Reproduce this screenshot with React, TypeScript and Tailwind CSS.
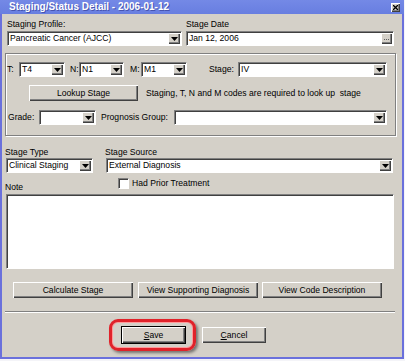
import React from "react"

const raised =
  "bg-[#d4d0c8] shadow-[inset_1px_1px_0_#ffffff,inset_-1px_-1px_0_#404040,inset_-2px_-2px_0_#808080]"
const sunken =
  "bg-white border border-t-[#808080] border-l-[#808080] border-b-white border-r-white shadow-[inset_1px_1px_0_#404040]"

function DropBtn() {
  return (
    <div className={`${raised} my-px mr-px flex w-[12px] shrink-0 items-center justify-center`}>
      <svg width="7" height="4" viewBox="0 0 7 4">
        <polygon points="0,0 7,0 3.5,4" fill="#000" />
      </svg>
    </div>
  )
}

function Select({ w, value }: { w: string; value?: string }) {
  return (
    <div className={`${w} ${sunken} flex h-[15px] shrink-0`}>
      <span className="flex-1 truncate pl-[2px] leading-[12px]">{value}</span>
      <DropBtn />
    </div>
  )
}

function Btn({ w, children, def }: { w: string; children: React.ReactNode; def?: boolean }) {
  return (
    <div
      className={`${w} ${raised} flex h-[16px] shrink-0 items-center justify-center ${
        def ? "outline outline-1 outline-[#000]" : ""
      }`}
    >
      {children}
    </div>
  )
}

export default function App() {
  return (
    <div className="relative h-[361px] w-[405px] overflow-hidden bg-[#f4f4f8] font-['Liberation_Sans',Arial,sans-serif] text-[8.6px] text-black">
      <div className="flex h-[359px] w-[404px] flex-col border-b-2 border-l-2 border-r-2 border-[#6a70dc] bg-[#d4d0c8]">
        {/* title bar */}
        <div className="-mx-[2px] flex h-[14px] shrink-0 items-center justify-between bg-gradient-to-b from-[#7489e6] to-[#687ee0] pl-[9px] pr-[4px]">
          <span className="text-[10px] font-bold leading-none text-white [text-shadow:1px_1px_0_#4654b0]">
            Staging/Status Detail - 2006-01-12
          </span>
          <div className={`${raised} mt-[1px] flex h-[9px] w-[9px] items-center justify-center`}>
            <svg width="5" height="5" viewBox="0 0 5 5">
              <path d="M0 0L5 5M5 0L0 5" stroke="#000" strokeWidth="1.3" />
            </svg>
          </div>
        </div>

        {/* profile / date */}
        <div className="mt-[4px] flex h-[12px] leading-[12px]">
          <span className="ml-[5px] w-[179px]">Staging Profile:</span>
          <span>Stage Date</span>
        </div>
        <div className="mt-px flex">
          <div className="ml-[5px]">
            <Select w="w-[175px]" value="Pancreatic Cancer (AJCC)" />
          </div>
          <div className={`${sunken} ml-[4px] flex h-[15px] w-[208px]`}>
            <span className="flex-1 pl-[2px] leading-[12px]">Jan 12, 2006</span>
            <div className={`${raised} my-px mr-px flex w-[11px] items-center justify-center gap-px pt-px`}>
              <div className="h-px w-px bg-[#606060]" />
              <div className="h-px w-px bg-[#606060]" />
              <div className="h-px w-px bg-[#606060]" />
            </div>
          </div>
        </div>

        {/* staging group */}
        <div className="ml-[3px] mt-[7px] flex h-[83px] w-[391px] flex-col border border-[#808080] pt-[8px] shadow-[inset_1px_1px_0_#ffffff,1px_1px_0_#ffffff]">
          <div className="flex h-[15px] items-center">
            <span className="w-[13px] pl-[1px]">T:</span>
            <Select w="w-[46px]" value="T4" />
            <span className="w-[14px] pl-[5px]">N:</span>
            <Select w="w-[45px]" value="N1" />
            <span className="w-[17px] pl-[6px]">M:</span>
            <Select w="w-[46px]" value="M1" />
            <span className="w-[51px] pl-[22px]">Stage:</span>
            <Select w="w-[149px]" value="IV" />
          </div>
          <div className="mt-[8px] flex h-[16px] items-center">
            <div className="ml-[23px]">
              <Btn w="w-[109px]">Lookup Stage</Btn>
            </div>
            <span className="ml-[8px]">Staging, T, N and M codes are required to look up&nbsp; stage</span>
          </div>
          <div className="mt-[9px] flex h-[15px] items-center">
            <span className="w-[33px] pl-[2px]">Grade:</span>
            <Select w="w-[57px]" />
            <span className="w-[78px] pl-[5px]">Prognosis Group:</span>
            <Select w="w-[213px]" />
          </div>
        </div>

        {/* stage type / source */}
        <div className="mt-[10px] flex h-[12px] leading-[12px]">
          <span className="ml-[3px] w-[100px]">Stage Type</span>
          <span>Stage Source</span>
        </div>
        <div className="flex">
          <div className="ml-[4px]">
            <Select w="w-[87px]" value="Clinical Staging" />
          </div>
          <div className="ml-[13px]">
            <Select w="w-[287px]" value="External Diagnosis" />
          </div>
        </div>

        {/* note / checkbox */}
        <div className="flex h-[20px] items-start">
          <span className="ml-[3px] mt-[8px] w-[113px] leading-[12px]">Note</span>
          <div className="mt-[5px] flex items-center">
            <div className={`${sunken} h-[11px] w-[11px]`} />
            <span className="ml-[3px] leading-[11px]">Had Prior Treatment</span>
          </div>
        </div>
        <div className={`${sunken} ml-[4px] mt-px h-[75px] w-[388px]`} />

        {/* action buttons */}
        <div className="mt-[13px] flex">
          <div className="ml-[11px]">
            <Btn w="w-[120px]">Calculate Stage</Btn>
          </div>
          <div className="ml-[5px]">
            <Btn w="w-[120px]">View Supporting Diagnosis</Btn>
          </div>
          <div className="ml-[4px]">
            <Btn w="w-[120px]">View Code Description</Btn>
          </div>
        </div>

        <div className="ml-[3px] mt-[13px] w-[390px] border-b border-t border-b-white border-t-[#808080]" />

        {/* save / cancel */}
        <div className="mt-[14px] flex">
          <div className="relative ml-[120px]">
            <Btn w="w-[63px]" def>
              <span>
                <span className="underline">S</span>ave
              </span>
            </Btn>
            <div className="pointer-events-none absolute -bottom-[8px] -left-[13px] -right-[11px] -top-[8px] rounded-[9px] border-[3px] border-[#e0222a] shadow-[2px_2px_3px_rgba(0,0,0,0.45),inset_0_0_0_1px_#ff9a9a]" />
          </div>
          <div className="ml-[17px]">
            <Btn w="w-[64px]">
              <span>
                <span className="underline">C</span>ancel
              </span>
            </Btn>
          </div>
        </div>
      </div>
    </div>
  )
}
